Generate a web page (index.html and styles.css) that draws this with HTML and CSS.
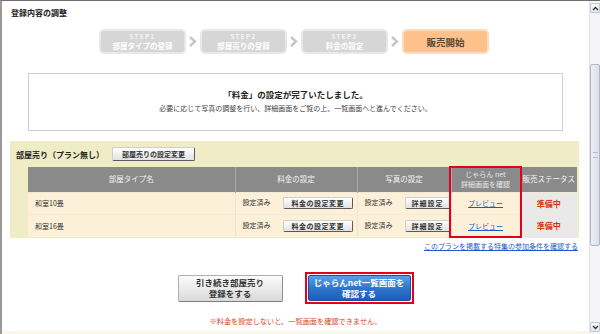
FILE: index.html
```html
<!DOCTYPE html>
<html lang="ja">
<head>
  <meta charset="UTF-8" />
  <title>登録内容の調整</title>
  <link rel="stylesheet" href="styles.css">
</head>
<body>
  <div class="window">
    <div class="page">
      <h1 class="title">登録内容の調整</h1>

      <div class="steps">
        <div class="step">
          <span class="step-no">STEP1</span>
          <span class="step-name">部屋タイプの登録</span>
        </div>
        <svg class="arrow" width="14" height="25" viewBox="0 0 14 25"><polyline points="4,8 9,12.5 4,17" /></svg>
        <div class="step">
          <span class="step-no">STEP2</span>
          <span class="step-name">部屋売りの登録</span>
        </div>
        <svg class="arrow" width="14" height="25" viewBox="0 0 14 25"><polyline points="4,8 9,12.5 4,17" /></svg>
        <div class="step">
          <span class="step-no">STEP3</span>
          <span class="step-name">料金の設定</span>
        </div>
        <svg class="arrow" width="14" height="25" viewBox="0 0 14 25"><polyline points="4,8 9,12.5 4,17" /></svg>
        <div class="step step-current">販売開始</div>
      </div>

      <div class="notice">
        <p class="notice-main">「料金」の設定が完了いたしました。</p>
        <p class="notice-sub">必要に応じて写真の調整を行い、詳細画面をご覧の上、一覧画面へと進んでください。</p>
      </div>

      <div class="rooms">
        <div class="rooms-head">
          <span class="rooms-title">部屋売り（プラン無し）</span>
          <button class="btn">部屋売りの設定変更</button>
        </div>
        <div class="table-wrap">
          <table>
            <colgroup>
              <col style="width: 207px">
              <col style="width: 122px">
              <col style="width: 94px">
              <col style="width: 69px">
              <col style="width: 57px">
            </colgroup>
            <tr>
              <th>部屋タイプ名</th>
              <th>料金の設定</th>
              <th>写真の設定</th>
              <th class="th-small">じゃらん net<br>詳細画面を確認</th>
              <th>販売ステータス</th>
            </tr>
            <tr>
              <td>和室10畳</td>
              <td>設定済み<button class="btn btn-row btn-price">料金の設定変更</button></td>
              <td>設定済み<button class="btn btn-row btn-photo">詳細設定</button></td>
              <td class="center"><a href="#">プレビュー</a></td>
              <td class="status">準備中</td>
            </tr>
            <tr class="last">
              <td>和室16畳</td>
              <td>設定済み<button class="btn btn-row btn-price">料金の設定変更</button></td>
              <td>設定済み<button class="btn btn-row btn-photo">詳細設定</button></td>
              <td class="center"><a href="#">プレビュー</a></td>
              <td class="status">準備中</td>
            </tr>
          </table>
          <div class="highlight"></div>
        </div>
      </div>

      <p class="more"><a href="#">このプランを掲載する特集の参加条件を確認する</a></p>

      <div class="actions">
        <button class="btn-big">引き続き部屋売り<br>登録をする</button>
        <div class="focus-frame">
          <button class="btn-blue">じゃらんnet一覧画面を<br>確認する</button>
        </div>
      </div>

      <p class="note">※料金を設定しないと、一覧画面を確認できません。</p>
      <div class="bottom-line"></div>
    </div>

    <div class="scrollbar">
      <div class="sb-btn">
        <svg width="7" height="5" viewBox="0 0 7 5"><polyline points="1,4 3.5,1.5 6,4" /></svg>
      </div>
      <div class="sb-track">
        <div class="sb-thumb"><span class="sb-grip"></span></div>
      </div>
      <div class="sb-btn">
        <svg width="7" height="5" viewBox="0 0 7 5"><polyline points="1,1 3.5,3.5 6,1" /></svg>
      </div>
    </div>
  </div>
</body>
</html>
```

FILE: styles.css
```css
* {
  box-sizing: border-box;
  margin: 0;
  padding: 0;
  font-family: "Noto Sans CJK JP", "Noto Sans", sans-serif;
}

body {
  width: 600px;
  height: 334px;
  overflow: hidden;
  background: #ffffff;
  color: #333;
}

.window {
  display: flex;
  height: 334px;
  border-top: 1px solid #6e6e6e;
  border-left: 2px solid #9a9a9a;
}

.page {
  flex: 1;
  display: flex;
  flex-direction: column;
}

.title {
  margin-top: 7px;
  padding-left: 9px;
  font-size: 8px;
  line-height: 10px;
  font-weight: bold;
  color: #222;
}

/* steps */
.steps {
  display: flex;
  margin-top: 11px;
  margin-left: 97px;
  height: 25px;
}

.step {
  width: 87px;
  height: 25px;
  display: flex;
  flex-direction: column;
  align-items: center;
  justify-content: center;
  background: #d6d6d6;
  border: 2px solid #e8e8e8;
  border-radius: 5px;
  color: #fff;
}

.step-no {
  font-size: 6px;
  line-height: 8px;
  letter-spacing: 1.5px;
  font-weight: bold;
  color: #f6f6f6;
}

.step-name {
  font-size: 7.5px;
  line-height: 10px;
  font-weight: bold;
}

.step-current {
  background: #fdc28b;
  border-color: #fddcbb;
  color: #5a4736;
  font-size: 9.5px;
  font-weight: bold;
}

.arrow polyline {
  fill: none;
  stroke: #c6c6c6;
  stroke-width: 2.4;
}

/* message box */
.notice {
  margin-top: 19px;
  margin-left: 26px;
  width: 535px;
  height: 58px;
  border: 1px solid #d0d0d0;
  text-align: center;
  padding-top: 14px;
}

.notice-main {
  font-size: 8.5px;
  line-height: 12px;
  font-weight: bold;
  color: #222;
}

.notice-sub {
  margin-top: 3px;
  font-size: 7px;
  line-height: 10px;
  color: #444;
}

/* room sale block */
.rooms {
  margin-top: 10px;
  margin-left: 8px;
  width: 569px;
  height: 97px;
  background: #efecc6;
  padding-top: 6px;
}

.rooms-head {
  display: flex;
  align-items: center;
  height: 14px;
  padding-left: 6px;
}

.rooms-title {
  font-size: 8px;
  font-weight: bold;
  color: #222;
  margin-right: 8px;
}

.btn {
  font-size: 7px;
  line-height: 10px;
  font-weight: bold;
  color: #333;
  background: linear-gradient(#ffffff, #e2e2e2);
  border: 1px solid;
  border-color: #cfcfcf #5a5a5a #5a5a5a #cfcfcf;
  border-radius: 2px;
  padding: 1px 9px;
  height: 14px;
}

.table-wrap {
  position: relative;
  margin-top: 6px;
  margin-left: 18px;
  width: 549px;
}

table {
  width: 549px;
  table-layout: fixed;
  border-collapse: collapse;
  font-size: 7px;
}

th {
  height: 25px;
  background: #8a8a8a;
  color: #f4f4f4;
  font-weight: normal;
  font-size: 7.5px;
  border-left: 1px solid #a9a9a9;
  line-height: 10px;
}

th:first-child {
  border-left: none;
}

.th-small {
  font-size: 7px;
  color: #e8e8e8;
}

td {
  height: 22px;
  padding: 0 7px;
  background: #fdf0d9;
  border-left: 1px solid #eee3cc;
  border-top: 1px solid #f4ead8;
  white-space: nowrap;
  color: #333;
}

td:first-child {
  border-left: none;
}

tr.last td {
  height: 23px;
}

.btn-row {
  height: 12px;
  padding: 0 8px;
  line-height: 10px;
  vertical-align: middle;
  letter-spacing: 0.5px;
}

.btn-price {
  margin-left: 12px;
}

.btn-photo {
  margin-left: 12px;
  padding: 0 6px;
  letter-spacing: 1px;
}

.center {
  text-align: center;
}

.center a {
  color: #1d5bc9;
}

.status {
  background: #e9e9e9;
  text-align: center;
  color: #d8340a;
  font-weight: bold;
  font-size: 8px;
}

.highlight {
  position: absolute;
  left: 421px;
  top: -1px;
  width: 73px;
  height: 72px;
  border: 2px solid #e4001a;
}

/* link under table */
.more {
  margin-top: 3px;
  padding-right: 11px;
  text-align: right;
  font-size: 7px;
  line-height: 10px;
}

.more a {
  color: #1d5bc9;
}

/* action buttons */
.actions {
  display: flex;
  justify-content: center;
  align-items: center;
  gap: 22px;
  margin-top: 21px;
  height: 32px;
}

.btn-big {
  width: 105px;
  height: 27px;
  font-size: 8.5px;
  line-height: 11px;
  font-weight: bold;
  color: #333;
  background: linear-gradient(#fbfbfb, #dadada);
  border: 1px solid #b0b0b0;
  border-bottom-color: #7c7c7c;
  border-right-color: #8c8c8c;
  border-radius: 2px;
}

.focus-frame {
  width: 109px;
  height: 32px;
  border: 2px solid #e4001a;
  padding: 1px;
  background: #fff;
}

.btn-blue {
  width: 100%;
  height: 100%;
  font-size: 8.5px;
  line-height: 11px;
  font-weight: bold;
  color: #fff;
  background: linear-gradient(#5d9fe6, #2f75cc 50%, #1b5fb8);
  border: 1px solid #1b4f98;
  border-radius: 2px;
}

.note {
  margin-top: 12px;
  text-align: center;
  font-size: 7.2px;
  line-height: 10px;
  color: #e0441a;
}

.bottom-line {
  margin-top: 5px;
  height: 3px;
  background: #fbf7ea;
}

/* scrollbar */
.scrollbar {
  width: 11px;
  display: flex;
  flex-direction: column;
  background: #f5f5f9;
  border-left: 1px solid #e2e2ea;
  padding: 2px 0 2px;
}

.sb-btn {
  height: 10px;
  display: flex;
  align-items: center;
  justify-content: center;
  background: linear-gradient(#fafafc, #e6e6ee);
  border: 1px solid #c6c8d4;
  border-radius: 1px;
}

.sb-btn polyline {
  fill: none;
  stroke: #333;
  stroke-width: 1.3;
}

.sb-track {
  flex: 1;
  padding-top: 51px;
}

.sb-thumb {
  height: 182px;
  display: flex;
  align-items: center;
  justify-content: center;
  background: linear-gradient(90deg, #eeeef4, #dedee8);
  border: 1px solid #b2b6c6;
  border-radius: 2px;
}

.sb-grip {
  width: 5px;
  height: 6px;
  border-top: 1px solid #b8bccb;
  border-bottom: 1px solid #b8bccb;
}
```
